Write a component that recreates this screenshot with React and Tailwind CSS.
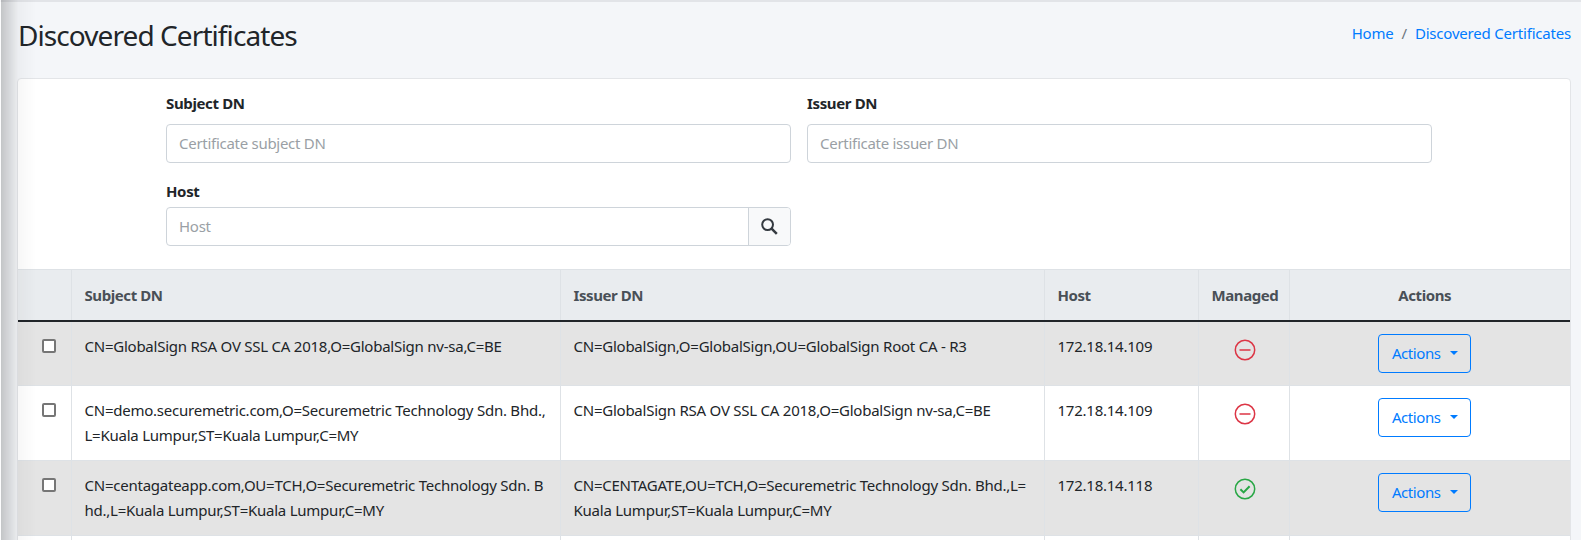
import React from "react";

const FONT = "font-['Noto_Sans','Open_Sans',sans-serif]";

function Minus() {
  return (
    <svg width="22" height="22" viewBox="0 0 22 22" fill="none" className="mx-auto mt-[5px]">
      <circle cx="11" cy="11" r="9.7" stroke="#dc3545" strokeWidth="1.5" />
      <path d="M5.5 11h11" stroke="#dc3545" strokeWidth="1.5" />
    </svg>
  );
}
function Check() {
  return (
    <svg width="22" height="22" viewBox="0 0 22 22" fill="none" className="mx-auto mt-[5px]">
      <circle cx="11" cy="11" r="9.7" stroke="#28a745" strokeWidth="1.5" />
      <path d="M6.4 11.2l3.2 3.2 6-6.2" stroke="#28a745" strokeWidth="2" />
    </svg>
  );
}
function SearchIcon() {
  return (
    <svg width="17" height="17" viewBox="0 0 17 17" fill="none" stroke="#343a40">
      <circle cx="6.6" cy="6.6" r="5.4" strokeWidth="2" />
      <path d="M10.6 10.6l5.2 5.2" strokeWidth="2.5" />
    </svg>
  );
}
function ActionsButton() {
  return (
    <button className="inline-flex h-[39px] w-[93px] items-center justify-center rounded border border-[#007bff] text-[#007bff] tracking-[-0.42px]">
      Actions
      <span className="ml-[9px] inline-block border-x-[4.8px] border-t-[4.8px] border-x-transparent border-t-[#007bff]" />
    </button>
  );
}

const rows = [
  {
    bg: "bg-[#e4e4e4]",
    subject: ["CN=GlobalSign RSA OV SSL CA 2018,O=GlobalSign nv-sa,C=BE"],
    issuer: ["CN=GlobalSign,O=GlobalSign,OU=GlobalSign Root CA - R3"],
    host: "172.18.14.109",
    ok: false,
  },
  {
    bg: "bg-white",
    subject: ["CN=demo.securemetric.com,O=Securemetric Technology Sdn. Bhd.,", "L=Kuala Lumpur,ST=Kuala Lumpur,C=MY"],
    issuer: ["CN=GlobalSign RSA OV SSL CA 2018,O=GlobalSign nv-sa,C=BE"],
    host: "172.18.14.109",
    ok: false,
  },
  {
    bg: "bg-[#e4e4e4]",
    subject: ["CN=centagateapp.com,OU=TCH,O=Securemetric Technology Sdn. B", "hd.,L=Kuala Lumpur,ST=Kuala Lumpur,C=MY"],
    issuer: ["CN=CENTAGATE,OU=TCH,O=Securemetric Technology Sdn. Bhd.,L=", "Kuala Lumpur,ST=Kuala Lumpur,C=MY"],
    host: "172.18.14.118",
    ok: true,
  },
];

const cell = "border-r border-b border-[#dee2e6] px-[13px] pt-[12px] pb-[12px] align-top";
const head = "border-r border-[#dee2e6] px-[13px] pt-[2px] text-left font-bold text-[#495057] tracking-[-0.42px]";

export default function App() {
  return (
    <div className={`relative h-[540px] overflow-hidden bg-[#f4f6f9] text-[15px] leading-[25px] text-[#212529] ${FONT}`}>
      <div className="absolute inset-y-0 left-0 z-10 w-[36px] border-l border-white/70 bg-gradient-to-r from-[#00000033] via-[#00000008] to-transparent" />
      <div className="h-[2px] bg-[#e2e4e8]" />
      <div className="flex h-[76px] items-start justify-between pl-[18px] pr-[10px] pt-[14px]">
        <h1 className="text-[28px] leading-[38px] tracking-[-0.92px]">Discovered Certificates</h1>
        <nav className="flex pt-[5px] tracking-[-0.2px] text-[#007bff]">
          <span>Home</span>
          <span className="px-[8px] text-[#6c757d]">/</span>
          <span>Discovered Certificates</span>
        </nav>
      </div>
      <div className="ml-[17px] mr-[10px] rounded-t border border-[#e3e5e8] bg-white">
        <div className="grid h-[190px] grid-cols-[625px_625px] content-start gap-x-[16px] pl-[148px] pt-[12px]">
          <div>
            <label className="block font-bold tracking-[-0.36px] leading-[25px]">Subject DN</label>
            <input placeholder="Certificate subject DN" className="mt-[8px] h-[39px] w-full rounded border border-[#ced4da] px-[12px] pb-[2px] tracking-[-0.28px] placeholder:text-[#9a9fa5]" />
          </div>
          <div>
            <label className="block font-bold tracking-[-0.36px] leading-[25px]">Issuer DN</label>
            <input placeholder="Certificate issuer DN" className="mt-[8px] h-[39px] w-full rounded border border-[#ced4da] px-[12px] pb-[2px] tracking-[-0.28px] placeholder:text-[#9a9fa5]" />
          </div>
          <div className="mt-[16px]">
            <label className="block font-bold tracking-[-0.36px] leading-[25px]">Host</label>
            <div className="mt-[3px] flex h-[39px] overflow-hidden rounded border border-[#ced4da]">
              <input placeholder="Host" className="min-w-0 flex-1 px-[12px] tracking-[-0.28px] placeholder:text-[#9a9fa5]" />
              <div className="flex w-[42px] items-center justify-center border-l border-[#ced4da] bg-[#f8f9fa]">
                <SearchIcon />
              </div>
            </div>
          </div>
        </div>
        <table className="w-full table-fixed border-collapse border-t border-[#dee2e6]">
          <colgroup>
            <col className="w-[53px]" />
            <col className="w-[489px]" />
            <col className="w-[484px]" />
            <col className="w-[154px]" />
            <col className="w-[91px]" />
            <col />
          </colgroup>
          <thead>
            <tr className="h-[51px] border-b-2 border-[#212529] bg-[#e9ecef]">
              <th className={head} />
              <th className={head}>Subject DN</th>
              <th className={head}>Issuer DN</th>
              <th className={head}>Host</th>
              <th className={`${head} !text-center !pl-[3px] !pr-0`}>Managed</th>
              <th className={`${head} !text-center border-r-0 !pr-[23px]`}>Actions</th>
            </tr>
          </thead>
          <tbody className="tracking-[-0.24px]">
            {rows.map((r) => (
              <tr key={r.subject[0]} className={r.bg}>
                <td className={`${cell} text-center !pl-[23px]`}>
                  <input type="checkbox" className="mt-[5px] h-[14px] w-[14px] appearance-none rounded-[2px] border-2 border-[#767676] bg-white" />
                </td>
                <td className={`${cell} whitespace-nowrap`}>
                  {r.subject.map((l) => <div key={l}>{l}</div>)}
                </td>
                <td className={`${cell} whitespace-nowrap`}>
                  {r.issuer.map((l) => <div key={l}>{l}</div>)}
                </td>
                <td className={cell}>{r.host}</td>
                <td className={`${cell} !pl-[3px] !pr-0`}>{r.ok ? <Check /> : <Minus />}</td>
                <td className={`${cell} border-r-0 text-center !pr-[23px]`}><ActionsButton /></td>
              </tr>
            ))}
            <tr className="h-[74px] bg-white">
              <td className={cell} /><td className={cell} /><td className={cell} /><td className={cell} /><td className={cell} /><td className={`${cell} border-r-0`} />
            </tr>
          </tbody>
        </table>
      </div>
    </div>
  );
}
